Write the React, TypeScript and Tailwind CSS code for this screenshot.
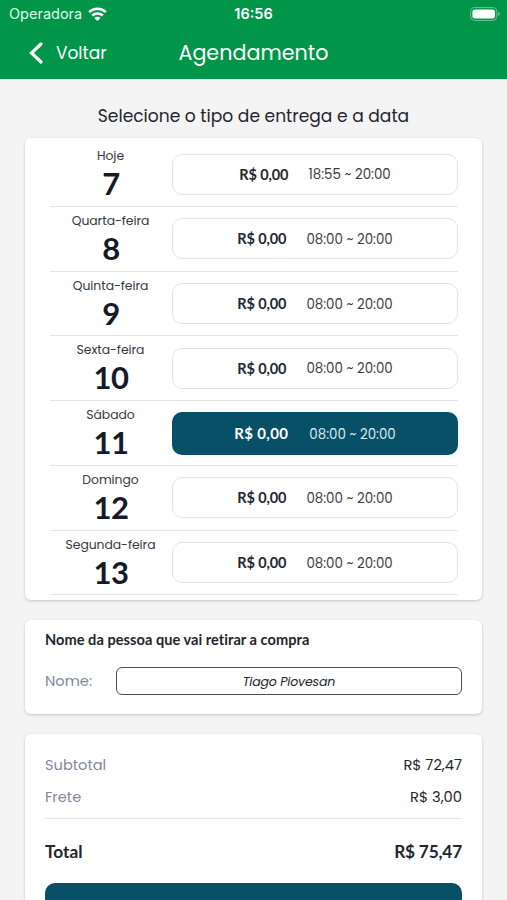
const days = [
  { name: 'Hoje', day: 7, time: '18:55 ~ 20:00' },
  { name: 'Quarta-feira', day: 8, time: '08:00 ~ 20:00' },
  { name: 'Quinta-feira', day: 9, time: '08:00 ~ 20:00' },
  { name: 'Sexta-feira', day: 10, time: '08:00 ~ 20:00' },
  { name: 'Sábado', day: 11, time: '08:00 ~ 20:00', selected: true },
  { name: 'Domingo', day: 12, time: '08:00 ~ 20:00' },
  { name: 'Segunda-feira', day: 13, time: '08:00 ~ 20:00' },
];

function StatusBar() {
  return (
    <div className="grid h-[27px] grid-cols-3 items-center pl-[9px] pr-[6px] font-['Inter',sans-serif]">
      <div className="flex items-center gap-[6px]">
        <span className="text-[14.5px] text-green-100">Operadora</span>
        <svg width="19" height="14" viewBox="0 0 19 14" fill="none" stroke="white" strokeWidth="2.5">
          <path d="M1.2 5.1C5.8 0.6 13.2 0.6 17.8 5.1" />
          <path d="M4.2 8.5C7.1 5.7 11.9 5.7 14.8 8.5" />
          <path d="M9.5 14L6.4 10.9C8.1 9.4 10.9 9.4 12.6 10.9Z" fill="white" stroke="none" />
        </svg>
      </div>
      <span className="pr-[3px] text-center text-[14.5px] font-semibold">16:56</span>
      <svg className="justify-self-end" width="31" height="14" viewBox="0 0 31 14">
        <rect x="0.6" y="0.6" width="26.2" height="12.8" rx="4" fill="none" stroke="#6fc490" />
        <rect x="2.4" y="2.4" width="22.6" height="9.2" rx="2.4" fill="white" />
        <path d="M28.2 4.8C30.2 5.4 30.2 8.6 28.2 9.2Z" fill="#6fc490" />
      </svg>
    </div>
  );
}

export default function App() {
  return (
    <div className="h-[900px] w-full overflow-hidden bg-[#f4f4f5] font-['Poppins','Inter',sans-serif] text-[#24262d]">
      <header className="h-[79px] bg-[#009549] text-white">
        <StatusBar />
        <div className="grid h-[51px] grid-cols-[153px_1fr_153px] items-center">
          <button className="flex items-center gap-[13px] pl-[29px]">
            <svg width="14" height="22" viewBox="0 0 14 22" fill="none" stroke="white" strokeWidth="3.2" strokeLinecap="round">
              <path d="M12 2L2.5 11L12 20" />
            </svg>
            <span className="pt-[3px] text-[17px]">Voltar</span>
          </button>
          <h1 className="text-center text-[20.7px]">Agendamento</h1>
        </div>
      </header>

      <main className="px-[25px]">
        <h2 className="flex h-[59px] items-center justify-center pt-[16px] text-[17.1px]">
          Selecione o tipo de entrega e a data
        </h2>

        {/* Datas de entrega */}
        <section className="h-[462px] rounded-md bg-white pl-[25px] pr-6 pt-1 shadow-[0_1px_3px_rgba(0,0,0,0.2)]">
          {days.map((d) => (
            <div key={d.day} className="flex h-[64.75px] border-b border-[#e3e4e6]">
              <div className="flex w-[122px] shrink-0 flex-col items-center pr-[1px] pt-[5px]">
                <span className="text-[12.4px] leading-[18px] tracking-[-0.05px] text-[#36383f]">{d.name}</span>
                <span className="pl-[1px] font-['Lato',sans-serif] text-[31px] font-bold leading-9 tracking-[-0.6px] text-[#161a28]">{d.day}</span>
              </div>
              {d.selected ? (
                <button className="mt-[11px] flex h-[43px] flex-1 items-center justify-center gap-[21px] rounded-[10px] bg-[#084f68] text-white">
                  <span className="font-['Lato',sans-serif] text-[15px] font-bold tracking-[0.35px]">R$ 0,00</span>
                  <span className="pt-[2px] text-[13.4px] leading-5 text-[#dcebf0]">{d.time}</span>
                </button>
              ) : (
                <button className="mt-[11.5px] flex h-[41px] flex-1 items-center justify-center gap-[20px] rounded-[10px] border border-[#e3e4e6]">
                  <span className="pt-[1px] font-['Lato',sans-serif] text-[14.5px] font-bold tracking-[-0.1px]">R$ 0,00</span>
                  <span className="pt-[2px] text-[13.4px] leading-5 text-[#3b3d43]">{d.time}</span>
                </button>
              )}
            </div>
          ))}
        </section>

        {/* Quem retira */}
        <section className="mt-5 h-[94px] rounded-md bg-white px-5 pt-[11px] shadow-[0_1px_3px_rgba(0,0,0,0.2)]">
          <h3 className="font-['Lato',sans-serif] text-[14.6px] font-bold leading-[18px] tracking-[0.03px]">
            Nome da pessoa que vai retirar a compra
          </h3>
          <div className="mt-[18px] flex items-center">
            <label htmlFor="nome" className="w-[71px] text-[14.7px] text-[#8188a0]">Nome:</label>
            <input
              id="nome"
              defaultValue="Tiago Piovesan"
              className="h-7 w-[347px] rounded-md border-[1.5px] border-[#4b4e54] pt-[1px] text-center text-[12.6px] italic tracking-[-0.2px] outline-none"
            />
          </div>
        </section>

        {/* Resumo do pedido */}
        <section className="mt-5 h-[240px] rounded-md bg-white px-5 pt-[15px] shadow-[0_1px_3px_rgba(0,0,0,0.2)]">
          <div className="flex h-8 items-center justify-between">
            <span className="pt-[1px] text-[14.6px] text-[#8188a0]">Subtotal</span>
            <span className="text-[14.7px]">R$ 72,47</span>
          </div>
          <div className="flex h-8 items-center justify-between">
            <span className="pt-[1px] text-[14.6px] text-[#8188a0]">Frete</span>
            <span className="text-[14.7px]">R$ 3,00</span>
          </div>
          <div className="mt-[5px] flex h-[65px] items-center justify-between border-t border-[#e3e6e9] pt-[2px] font-['Lato',sans-serif] text-[17.3px] font-bold">
            <span>Total</span>
            <span className="tracking-[-0.2px]">R$ 75,47</span>
          </div>
          <div className="h-12 rounded-[10px] bg-[#084f68]" />
        </section>
      </main>
    </div>
  );
}
